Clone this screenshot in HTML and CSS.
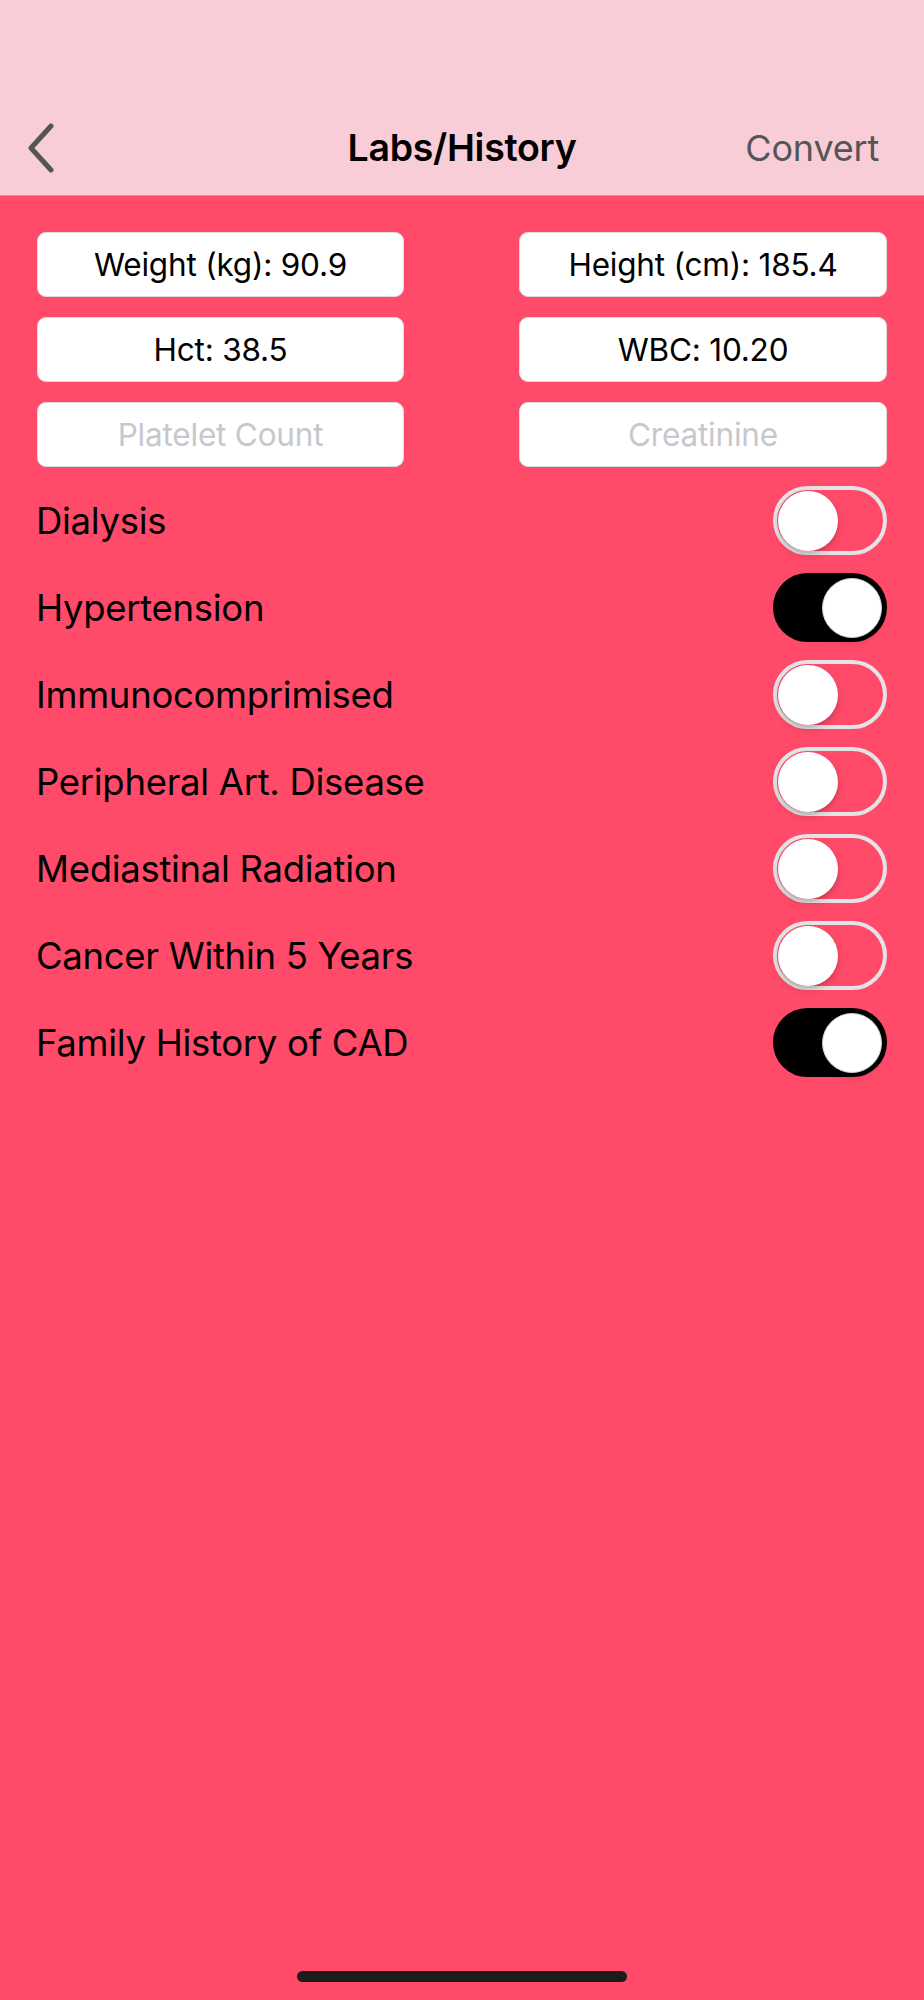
FILE: index.html
```html
<!DOCTYPE html>
<html lang="en">
<head>
<meta charset="utf-8">
<title>Labs/History</title>
<link rel="stylesheet" href="styles.css">
</head>
<body>
<div class="screen">
  <header class="nav">
    <div class="nav-row">
      <button class="back" aria-label="Back">
        <svg width="30" height="50" viewBox="0 0 30 50"><polyline points="26,3 6,25 26,47" fill="none" stroke="#555555" stroke-width="5" stroke-linecap="round" stroke-linejoin="round"/></svg>
      </button>
      <h1 class="title">Labs/History</h1>
      <span class="action">Convert</span>
    </div>
  </header>
  <main class="content">
    <div class="fields">
      <div class="field">Weight (kg): 90.9</div>
      <div class="field">Height (cm): 185.4</div>
      <div class="field">Hct: 38.5</div>
      <div class="field">WBC: 10.20</div>
      <div class="field placeholder">Platelet Count</div>
      <div class="field placeholder">Creatinine</div>
    </div>
    <ul class="toggles">
      <li class="row"><span class="label">Dialysis</span><span class="switch"><span class="knob"></span></span></li>
      <li class="row"><span class="label">Hypertension</span><span class="switch on"><span class="knob"></span></span></li>
      <li class="row"><span class="label">Immunocomprimised</span><span class="switch"><span class="knob"></span></span></li>
      <li class="row"><span class="label">Peripheral Art. Disease</span><span class="switch"><span class="knob"></span></span></li>
      <li class="row"><span class="label">Mediastinal Radiation</span><span class="switch"><span class="knob"></span></span></li>
      <li class="row"><span class="label">Cancer Within 5 Years</span><span class="switch"><span class="knob"></span></span></li>
      <li class="row"><span class="label">Family History of CAD</span><span class="switch on"><span class="knob"></span></span></li>
    </ul>
  </main>
  <div class="home-indicator"></div>
</div>
</body>
</html>
```
FILE: styles.css
```css
* { box-sizing: border-box; }
html, body { margin: 0; padding: 0; }
body {
  font-family: "Inter", "Liberation Sans", sans-serif;
  background: #ff4b69;
  color: #000;
}
.screen {
  width: 924px;
  min-height: 2000px;
  display: flex;
  flex-direction: column;
  background: #ff4b69;
}
.nav {
  background: #f8cdd8;
  padding-top: 100px;
  border-bottom: 1px solid #e38c9c;
}
.nav-row {
  height: 95px;
  display: flex;
  align-items: center;
  justify-content: space-between;
  padding: 0 45px 0 25px;
  position: relative;
}
.back {
  background: none;
  border: 0;
  padding: 0;
  width: 30px;
  height: 50px;
  display: flex;
}
.title {
  position: absolute;
  left: 0;
  right: 0;
  text-align: center;
  margin: 0;
  font-size: 37.5px;
  font-weight: 600;
  letter-spacing: -0.3px;
  pointer-events: none;
}
.action {
  font-size: 36px;
  color: #555555;
  letter-spacing: -0.2px;
}
.content {
  flex: 1;
  padding: 36px 37px 0;
}
.fields {
  display: grid;
  grid-template-columns: 367px 368px;
  column-gap: 115px;
  row-gap: 20px;
}
.field {
  height: 65px;
  background: #fff;
  border: 1px solid #dcdcdc;
  border-radius: 9px;
  display: flex;
  align-items: center;
  justify-content: center;
  font-size: 31.5px;
  letter-spacing: -0.2px;
  color: #000;
}
.field.placeholder { color: #c7c7cd; }
.toggles {
  list-style: none;
  margin: 19px 0 0;
  padding: 0;
  display: flex;
  flex-direction: column;
  gap: 18px;
}
.row {
  height: 69px;
  display: flex;
  align-items: center;
  justify-content: space-between;
}
.label {
  font-size: 36.5px;
  letter-spacing: -0.3px;
  margin-left: -1px;
}
.switch {
  width: 114px;
  height: 69px;
  border-radius: 35px;
  border: 4px solid #e4e4e6;
  display: flex;
  align-items: center;
  padding: 0 0 0 1px;
}
.switch .knob {
  width: 60px;
  height: 60px;
  border-radius: 50%;
  background: #fff;
  box-shadow: 0 4px 9px rgba(0,0,0,0.16), 0 3px 1px rgba(0,0,0,0.06);
}
.switch.on {
  background: #000;
  border-color: #000;
  justify-content: flex-end;
  padding: 0 1px 0 0;
}
.switch.on .knob {
  border: 1px solid #d0d0d0;
}
.home-indicator {
  align-self: center;
  width: 330px;
  height: 11px;
  border-radius: 6px;
  background: #1c1c1c;
  margin: 0 0 18px;
}
```
